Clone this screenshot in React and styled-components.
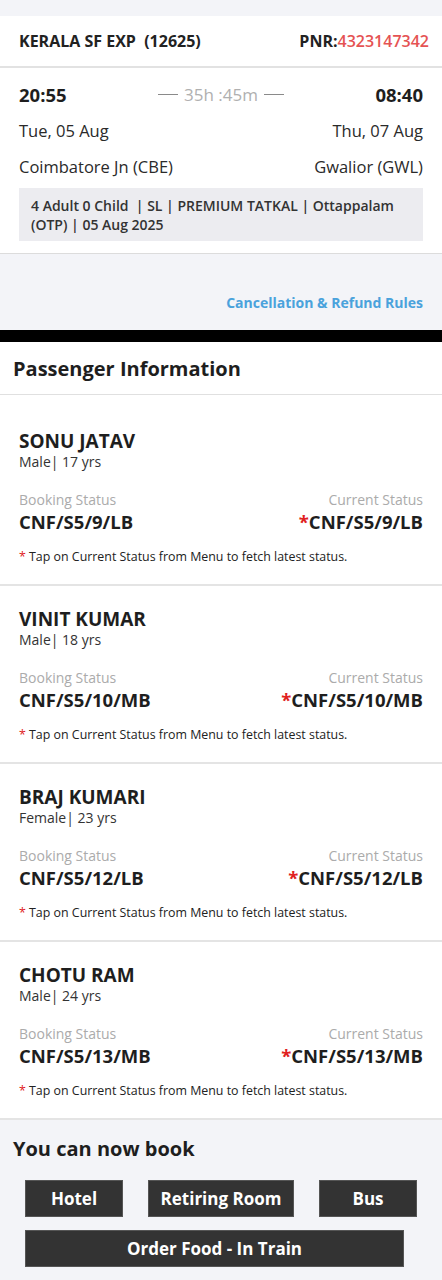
import React from "react";
import styled, { createGlobalStyle } from "styled-components";

const GlobalStyle = createGlobalStyle`
  body {
    margin: 0;
    background: #f3f4f8;
    font-family: "Open Sans", "Noto Sans", sans-serif;
    color: #222;
  }
`;

const passengers = [
  { name: "SONU JATAV", info: "Male| 17 yrs", booking: "CNF/S5/9/LB", current: "CNF/S5/9/LB" },
  { name: "VINIT KUMAR", info: "Male| 18 yrs", booking: "CNF/S5/10/MB", current: "CNF/S5/10/MB" },
  { name: "BRAJ KUMARI", info: "Female| 23 yrs", booking: "CNF/S5/12/LB", current: "CNF/S5/12/LB" },
  { name: "CHOTU RAM", info: "Male| 24 yrs", booking: "CNF/S5/13/MB", current: "CNF/S5/13/MB" },
];

const App = () => {
  return (
    <Page>
      <GlobalStyle />
      <TripCard>
        <TrainHeader>
          <TrainName>KERALA SF EXP&nbsp; (12625)</TrainName>
          <Pnr>
            PNR:<PnrNumber>4323147342</PnrNumber>
          </Pnr>
        </TrainHeader>
        <Route>
          <RouteRow>
            <Time>20:55</Time>
            <Duration>
              <Dash />
              35h :45m
              <Dash />
            </Duration>
            <Time>08:40</Time>
          </RouteRow>
          <RouteRow>
            <Plain>Tue, 05 Aug</Plain>
            <Plain>Thu, 07 Aug</Plain>
          </RouteRow>
          <RouteRow>
            <Plain>Coimbatore Jn (CBE)</Plain>
            <Plain>Gwalior (GWL)</Plain>
          </RouteRow>
          <InfoBox>
            4 Adult 0 Child &nbsp;| SL | PREMIUM TATKAL | Ottappalam (OTP) | 05 Aug 2025
          </InfoBox>
        </Route>
      </TripCard>

      <LinkBar>
        <RulesLink href="#">Cancellation &amp; Refund Rules</RulesLink>
      </LinkBar>

      <BlackBar />

      <PassengerSection>
        <SectionTitle>Passenger Information</SectionTitle>
        {passengers.map((p, i) => (
          <PassengerBlock key={p.name} $first={i === 0}>
            <PassengerName>{p.name}</PassengerName>
            <PassengerInfo>{p.info}</PassengerInfo>
            <StatusRow>
              <StatusCol>
                <StatusLabel>Booking Status</StatusLabel>
                <StatusValue>{p.booking}</StatusValue>
              </StatusCol>
              <StatusCol $right>
                <StatusLabel>Current Status</StatusLabel>
                <StatusValue>
                  <Star>*</Star>
                  {p.current}
                </StatusValue>
              </StatusCol>
            </StatusRow>
            <Note>
              <Star>*</Star> Tap on Current Status from Menu to fetch latest status.
            </Note>
          </PassengerBlock>
        ))}
      </PassengerSection>

      <BookSection>
        <SectionTitle as="h2" $plain>
          You can now book
        </SectionTitle>
        <ButtonRow>
          <BookButton $w={98}>Hotel</BookButton>
          <BookButton $w={146}>Retiring Room</BookButton>
          <BookButton $w={98}>Bus</BookButton>
        </ButtonRow>
        <ButtonRow>
          <BookButton $w={379}>Order Food - In Train</BookButton>
        </ButtonRow>
      </BookSection>
    </Page>
  );
};

const Page = styled.div`
  width: 442px;
  padding-top: 16px;
  background: #f3f4f8;
`;

const TripCard = styled.div`
  background: #fff;
  border-bottom: 1px solid #dcdcdc;
`;

const TrainHeader = styled.div`
  display: flex;
  justify-content: space-between;
  align-items: center;
  height: 50px;
  padding: 0 13px 0 19px;
  border-bottom: 2px solid #e2e2e2;
  font-size: 16px;
  font-weight: 700;
`;

const TrainName = styled.span`
  color: #222;
`;

const Pnr = styled.span`
  color: #222;
`;

const PnrNumber = styled.span`
  color: #e55353;
  font-weight: 600;
`;

const Route = styled.div`
  padding: 8px 19px 12px;
  display: flex;
  flex-direction: column;
`;

const RouteRow = styled.div`
  display: flex;
  justify-content: space-between;
  align-items: center;
  height: 36px;
`;

const Time = styled.span`
  font-size: 18.5px;
  font-weight: 700;
  color: #1e1e1e;
`;

const Duration = styled.span`
  display: flex;
  align-items: center;
  gap: 6px;
  font-size: 17px;
  color: #b0b0b0;
`;

const Dash = styled.span`
  display: inline-block;
  width: 20px;
  height: 1px;
  background: #8a8a8a;
`;

const Plain = styled.span`
  font-size: 16.5px;
  color: #2a2a2a;
`;

const InfoBox = styled.div`
  margin-top: 4px;
  background: #ececf0;
  padding: 8px 12px 7px;
  font-size: 14px;
  line-height: 19px;
  font-weight: 600;
  color: #333;
`;

const LinkBar = styled.div`
  display: flex;
  justify-content: flex-end;
  align-items: center;
  height: 76px;
  padding: 21px 19px 0;
  box-sizing: border-box;
`;

const RulesLink = styled.a`
  color: #4aa2dc;
  font-size: 14px;
  font-weight: 700;
  text-decoration: none;
`;

const BlackBar = styled.div`
  height: 12px;
  background: #000;
`;

const PassengerSection = styled.div`
  background: #fff;
`;

const SectionTitle = styled.h1`
  margin: 0;
  padding: 0 13px;
  height: ${(p) => (p.$plain ? "56px" : "53px")};
  margin-bottom: ${(p) => (p.$plain ? "4px" : "0")};
  display: flex;
  align-items: center;
  font-size: 20px;
  font-weight: 700;
  color: #1e1e1e;
  border-bottom: ${(p) => (p.$plain ? "none" : "1px solid #e0e0e0")};
  box-sizing: border-box;
`;

const PassengerBlock = styled.div`
  padding: ${(p) => (p.$first ? "35px" : "22px")} 19px 18px;
  border-bottom: 2px solid #e4e4e4;
`;

const PassengerName = styled.div`
  font-size: 19px;
  line-height: 22px;
  font-weight: 700;
  color: #1e1e1e;
`;

const PassengerInfo = styled.div`
  font-size: 14px;
  line-height: 20px;
  color: #333;
`;

const StatusRow = styled.div`
  display: flex;
  justify-content: space-between;
  margin-top: 18px;
`;

const StatusCol = styled.div`
  display: flex;
  flex-direction: column;
  align-items: ${(p) => (p.$right ? "flex-end" : "flex-start")};
`;

const StatusLabel = styled.span`
  font-size: 14px;
  line-height: 20px;
  color: #ababab;
`;

const StatusValue = styled.span`
  font-size: 18.5px;
  line-height: 24px;
  font-weight: 700;
  color: #1e1e1e;
`;

const Star = styled.span`
  color: #e02020;
`;

const Note = styled.div`
  margin-top: 14px;
  font-size: 12.4px;
  line-height: 18px;
  color: #222;
`;

const BookSection = styled.div`
  padding-bottom: 14px;
`;

const ButtonRow = styled.div`
  display: flex;
  gap: 25px;
  padding: 0 25px;
  margin-bottom: 13px;
`;

const BookButton = styled.button`
  width: ${(p) => p.$w}px;
  height: 37px;
  border: 1px solid #555;
  background: #333;
  color: #fff;
  font-family: "Open Sans", "Noto Sans", sans-serif;
  font-size: 17px;
  font-weight: 700;
  cursor: pointer;
`;

export default App;
